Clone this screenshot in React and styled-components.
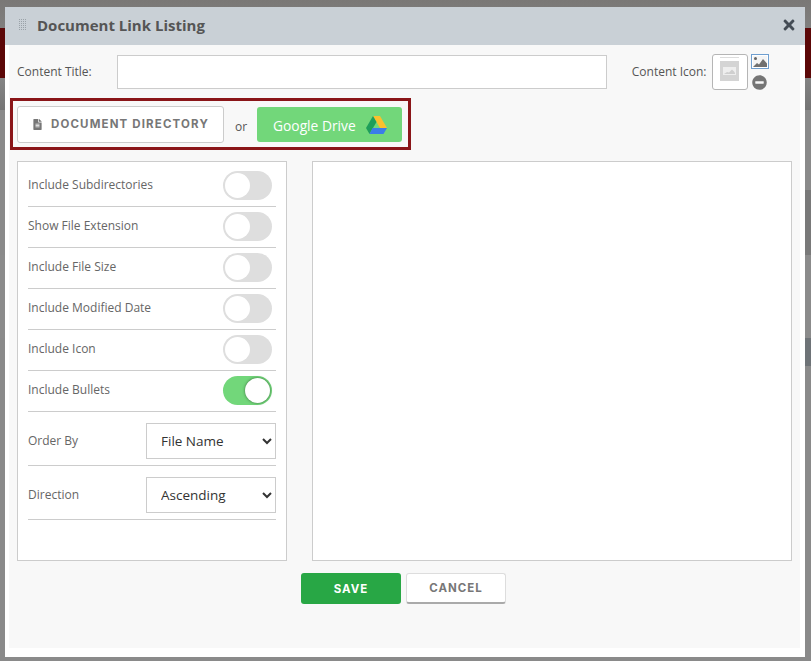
import React from "react";
import styled, { createGlobalStyle } from "styled-components";
import { FaTimes, FaFileAlt, FaMinusCircle } from "react-icons/fa";

const GlobalStyle = createGlobalStyle`
  html, body {
    margin: 0;
    padding: 0;
    height: 100%;
    overflow: hidden;
    background: #858585;
    font-family: "Open Sans", "Liberation Sans", sans-serif;
  }
`;

const Page = styled.div`
  position: relative;
  width: 811px;
  height: 661px;
  overflow: hidden;
  display: flex;
  flex-direction: column;
  background: #878787;
`;

const PageTop = styled.div`
  height: 28px;
  background: linear-gradient(#7a7876, #807f7e);
`;

const PageBanner = styled.div`
  height: 50px;
  background: #5c0808;
`;

const PageStrip = styled.div`
  height: ${(p) => p.$h}px;
  background: ${(p) => p.$bg};
`;

const Modal = styled.div`
  position: absolute;
  left: 5px;
  top: 7px;
  width: 800px;
  height: 650px;
  background: #fff;
  display: flex;
  flex-direction: column;
`;

const Header = styled.div`
  height: 38px;
  box-sizing: border-box;
  background: #c9d0d6;
  display: flex;
  align-items: center;
  padding: 0 8px 3px 14px;
  flex-shrink: 0;
`;

const Grip = styled.div`
  width: 8px;
  height: 12px;
  margin: 1px 10px 0 0;
  background:
    repeating-linear-gradient(0deg, #c9d0d6 0 1px, transparent 1px 2px),
    repeating-linear-gradient(90deg, #9aa2a8 0 1px, transparent 1px 2px);
`;

const Title = styled.h1`
  margin: 0;
  flex: 1;
  font-size: 15px;
  font-weight: 700;
  color: #555;
`;

const Close = styled.span`
  display: flex;
  color: #444c55;
  font-size: 16px;
`;

const Body = styled.div`
  width: 791px;
  height: 603px;
  margin-left: 4px;
  background: #f8f8f8;
  padding: 0 8px 0 8px;
  box-sizing: border-box;
  display: flex;
  flex-direction: column;
`;

const TitleRow = styled.div`
  display: flex;
  align-items: center;
  height: 36px;
  margin-top: 9px;
`;

const Label = styled.label`
  font-size: 12px;
  color: #555;
  padding-bottom: 2px;
`;

const TitleInput = styled.input`
  width: 490px;
  height: 34px;
  box-sizing: border-box;
  margin-left: 25px;
  margin-right: 25px;
  border: 1px solid #ccc;
  background: #fff;
`;

const IconBox = styled.div`
  width: 36px;
  height: 36px;
  box-sizing: border-box;
  margin-left: 5px;
  padding-top: 2px;
  border: 1px solid #b5b5b5;
  border-radius: 3px;
  background: #fff;
  display: flex;
  align-items: flex-start;
  justify-content: center;
`;

const IconActions = styled.div`
  width: 18px;
  height: 36px;
  margin-left: 3px;
  display: flex;
  flex-direction: column;
  align-items: center;
  gap: 6px;
  color: #757575;
`;

const SourceBox = styled.div`
  display: flex;
  align-items: center;
  width: 401px;
  height: 52px;
  box-sizing: border-box;
  margin: 8px 0 0 -7px;
  padding-left: 4px;
  border: 3px solid #8a1518;
`;

const DirectoryButton = styled.button`
  width: 207px;
  height: 37px;
  padding: 0;
  display: flex;
  align-items: center;
  justify-content: center;
  gap: 8px;
  background: #fff;
  border: 1px solid #ccc;
  border-radius: 3px;
  color: #777;
  font-family: "Inter", sans-serif;
  font-size: 11.5px;
  font-weight: 700;
  letter-spacing: 1.15px;
`;

const Or = styled.span`
  width: 33px;
  box-sizing: border-box;
  padding: 4px 0 0 1px;
  text-align: center;
  font-size: 12px;
  color: #555;
`;

const DriveButton = styled.button`
  width: 145px;
  height: 35px;
  padding: 2px 0 0 16px;
  display: flex;
  align-items: center;
  gap: 10px;
  background: #72d77a;
  border: 0;
  border-radius: 3px;
  color: #fff;
  font-family: "Open Sans", sans-serif;
  font-size: 13.8px;
`;

const Columns = styled.div`
  display: flex;
  margin-top: 11px;
  gap: 25px;
`;

const OptionsPanel = styled.div`
  width: 270px;
  height: 400px;
  box-sizing: border-box;
  border: 1px solid #ccc;
  background: #fff;
  padding: 4px 10px 0;
`;

const ToggleRow = styled.div`
  height: 41px;
  box-sizing: border-box;
  display: flex;
  align-items: center;
  justify-content: space-between;
  padding: 0 4px 2px 0;
  border-bottom: 1px solid #ccc;
  font-size: 12px;
  color: #666;
`;

const RowLabel = styled.span`
  padding-bottom: 2px;
`;

const Toggle = styled.span`
  position: relative;
  width: 49px;
  height: 29px;
  border-radius: 15px;
  background: ${(p) => (p.$on ? "#72d77a" : "#dedede")};
`;

const Knob = styled.span`
  position: absolute;
  top: 2px;
  left: ${(p) => (p.$on ? "22px" : "2px")};
  width: 25px;
  height: 25px;
  border-radius: 50%;
  background: #fff;
  box-shadow: ${(p) => (p.$on ? "0 0 3px rgba(0,0,0,0.5)" : "none")};
`;

const SelectRow = styled.div`
  height: 54px;
  box-sizing: border-box;
  padding-top: 4px;
  display: flex;
  align-items: center;
  justify-content: space-between;
  border-bottom: 1px solid #ccc;
  font-size: 12px;
  color: #666;
`;

const Select = styled.select`
  width: 130px;
  height: 36px;
  box-sizing: border-box;
  padding-left: 10px;
  border: 1px solid #ccc;
  border-radius: 0;
  background: #fff;
  color: #333;
  font-family: "Open Sans", sans-serif;
  font-size: 13.5px;
`;

const ListPanel = styled.div`
  width: 480px;
  height: 400px;
  box-sizing: border-box;
  border: 1px solid #ccc;
  background: #fff;
`;

const Footer = styled.div`
  display: flex;
  justify-content: center;
  gap: 5px;
  margin-top: 12px;
  margin-left: -2px;
`;

const ActionButton = styled.button`
  width: 100px;
  height: 31px;
  padding: 0;
  border: ${(p) => (p.$primary ? "0" : "1px solid #ddd")};
  border-bottom: ${(p) => (p.$primary ? "0" : "2px solid #aaa")};
  border-radius: 3px;
  background: ${(p) => (p.$primary ? "#28a745" : "#fff")};
  color: ${(p) => (p.$primary ? "#fff" : "#777")};
  font-family: "Inter", sans-serif;
  font-size: 11.5px;
  font-weight: 700;
  letter-spacing: 1px;
`;

const DriveLogo = () => (
  <svg width="21" height="18" viewBox="0 0 21 18">
    <path d="M7 0h7l7 12h-7z" fill="#fbc02d" />
    <path d="M7 0l3.500 6L3.500 18 0 12z" fill="#1e9e5a" />
    <path d="M6.500 12H21l-3.500 6H3.500z" fill="#3b7de8" />
  </svg>
);

const IconPlaceholder = () => (
  <svg width="19" height="24" viewBox="0 0 19 24">
    <rect x="0" y="0" width="19" height="1" fill="#dcdcdc" />
    <rect x="0" y="4" width="19" height="20" fill="#d4d4d4" />
    <rect x="3" y="10" width="13" height="8" fill="#eee" />
    <path d="M4 17l3-2 2 .5 3-3 2 2 1 1.500v1H4z" fill="#cfcfcf" />
  </svg>
);

const ImageIcon = () => (
  <svg width="18" height="15" viewBox="0 0 18 15">
    <rect x="0.500" y="0.500" width="17" height="14" fill="#fff" stroke="#6f9fd0" />
    <rect x="2" y="2" width="14" height="11" fill="#f4f4f4" />
    <circle cx="4.500" cy="4.500" r="1.500" fill="#666" />
    <path d="M2 13l4-4 2 1.500L12 5l4 4.500V13z" fill="#707070" />
  </svg>
);

const toggles = [
  ["Include Subdirectories", false],
  ["Show File Extension", false],
  ["Include File Size", false],
  ["Include Modified Date", false],
  ["Include Icon", false],
  ["Include Bullets", true],
];

const selects = [
  ["Order By", ["File Name", "Modified Date", "File Size"]],
  ["Direction", ["Ascending", "Descending"]],
];

export default function App() {
  return (
    <>
      <GlobalStyle />
      <Page>
        <PageTop />
        <PageBanner />
        <PageStrip $h={32} $bg="linear-gradient(#858585, #757575)" />
        <PageStrip $h={80} $bg="#8a8a8a" />
        <PageStrip $h={65} $bg="linear-gradient(90deg, #8a8a8a 50%, #797979 50%)" />
        <PageStrip $h={83} $bg="#8b8b8b" />
        <PageStrip $h={28} $bg="linear-gradient(90deg, #8a8a8a 50%, #6e7377 50%)" />
        <PageStrip $h={295} $bg="#8a8a8a" />
        <Modal>
          <Header>
            <Grip />
            <Title>Document Link Listing</Title>
            <Close>
              <FaTimes />
            </Close>
          </Header>
          <Body>
            <TitleRow>
              <Label>Content Title:</Label>
              <TitleInput type="text" />
              <Label>Content Icon:</Label>
              <IconBox>
                <IconPlaceholder />
              </IconBox>
              <IconActions>
                <ImageIcon />
                <FaMinusCircle size={15} />
              </IconActions>
            </TitleRow>
            <SourceBox>
              <DirectoryButton>
                <FaFileAlt size={11} />
                DOCUMENT DIRECTORY
              </DirectoryButton>
              <Or>or</Or>
              <DriveButton>
                Google Drive
                <DriveLogo />
              </DriveButton>
            </SourceBox>
            <Columns>
              <OptionsPanel>
                {toggles.map(([label, on]) => (
                  <ToggleRow key={label}>
                    <RowLabel>{label}</RowLabel>
                    <Toggle $on={on}>
                      <Knob $on={on} />
                    </Toggle>
                  </ToggleRow>
                ))}
                {selects.map(([label, options]) => (
                  <SelectRow key={label}>
                    {label}
                    <Select defaultValue={options[0]}>
                      {options.map((o) => (
                        <option key={o}>{o}</option>
                      ))}
                    </Select>
                  </SelectRow>
                ))}
              </OptionsPanel>
              <ListPanel />
            </Columns>
            <Footer>
              <ActionButton $primary>SAVE</ActionButton>
              <ActionButton>CANCEL</ActionButton>
            </Footer>
          </Body>
        </Modal>
      </Page>
    </>
  );
}
